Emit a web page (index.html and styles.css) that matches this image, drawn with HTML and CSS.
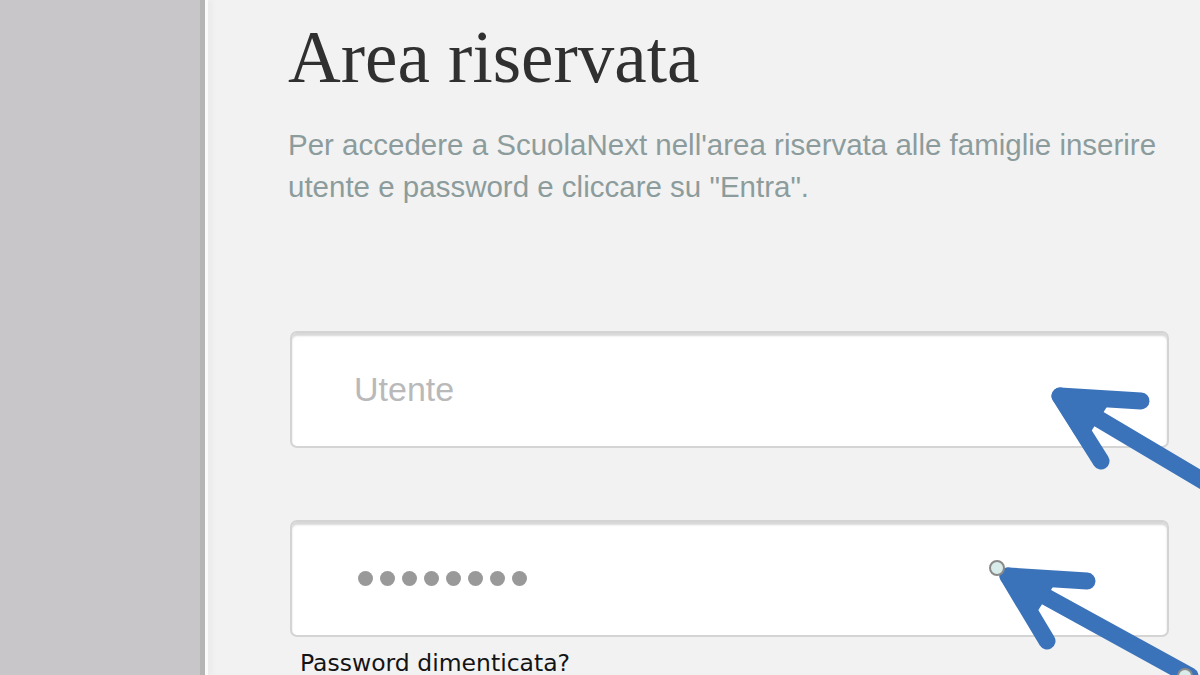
FILE: index.html
```html
<html>
<head>
    <link rel="stylesheet" href="styles.css">
</head>
<body>
    <div class="page">
        <div class="side"></div>
        <div class="main">
            <h1 class="title">Area riservata</h1>
            <p class="intro">Per accedere a ScuolaNext nell'area riservata alle famiglie inserire utente e password e cliccare su "Entra".</p>

            <div class="field">
                <span class="placeholder">Utente</span>
            </div>

            <div class="field field-pass">
                <span class="dots">
                    <i></i><i></i><i></i><i></i><i></i><i></i><i></i><i></i>
                </span>
            </div>

            <a class="forgot" href="#">Password dimenticata?</a>
        </div>

        <!-- annotation arrows drawn over the form -->
        <svg class="arrows" width="1200" height="675" viewBox="0 0 1200 675">
            <g stroke="#3b73ba" stroke-width="17" stroke-linecap="round" stroke-linejoin="round" fill="#3b73ba">
                <path d="M1060 396 L1215 488" fill="none" />
                <path d="M1141 401 L1060 396 L1101 461" fill="none" />
                <path d="M1062 398 L1100 402 L1082 430 Z" />
                <path d="M1008 576 L1190 676" fill="none" />
                <path d="M1087 581 L1008 576 L1047 641" fill="none" />
                <path d="M1010 578 L1046 582 L1029 609 Z" />
            </g>
            <g fill="#d8ecea" stroke="#8a8a8a" stroke-width="2">
                <circle cx="997" cy="568" r="7" />
                <circle cx="1185" cy="676" r="7" />
            </g>
        </svg>
    </div>
</body>
</html>
```

FILE: styles.css
```css
html, body { margin: 0; padding: 0; }
body { background: #f2f2f2; font-family: "Liberation Sans", Arial, sans-serif; }

.page { position: relative; display: flex; width: 1200px; height: 675px; overflow: hidden; }

.side { width: 200px; flex: none; background: #c8c6c8; border-right: 5px solid #b6b5b6; box-shadow: 3px 0 0 #fbfbfb, 8px 0 4px #ececec; }

.main { flex: 1; padding: 0 31px 0 83px; }

.title { margin: 16px 0 0; font-family: "Liberation Serif", "Times New Roman", serif; font-weight: normal; font-size: 73px; line-height: 84px; color: #303030; }

.intro { margin: 24px 0 0; font-size: 29.5px; line-height: 42px; color: #8c9c9c; }

.field { display: flex; align-items: center; height: 113px; margin: 123px 0 0 2px; padding-left: 62px; background: #ffffff; border: 2px solid #d4d4d4; border-radius: 7px; box-shadow: inset 0 3px 2px #d8d8d8; }
.field-pass { margin-top: 72px; padding-left: 66px; }

.placeholder { font-size: 34px; color: #b9b9b9; }

.dots { display: flex; gap: 7px; }
.dots i { display: block; width: 15px; height: 15px; border-radius: 50%; background: #999999; }

.forgot { display: block; margin: 12px 0 0 12px; font-family: "DejaVu Sans", Verdana, sans-serif; font-size: 23.5px; color: #141414; text-decoration: none; }

.arrows { position: absolute; left: 0; top: 0; }
```
